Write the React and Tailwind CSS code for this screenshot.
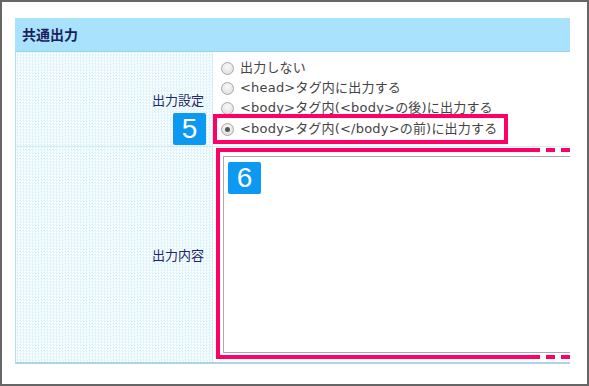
import React from 'react'

const jp = "font-['Noto_Sans_CJK_JP','Noto_Sans',sans-serif]"
const optFont = "font-['DejaVu_Sans','Noto_Sans_CJK_JP',sans-serif]"
const hatch =
  'bg-[conic-gradient(#dff4fa_25%,#fcfeff_0_50%,#dff4fa_0_75%,#fcfeff_0)] bg-size-[3px_3px]'

function Radio({ checked }) {
  return (
    <span className="w-[13px] h-[13px] shrink-0 rounded-full border border-[#a8a8a8] bg-[radial-gradient(circle_at_50%_35%,#fafafa,#d9d9d9)] flex items-center justify-center">
      {checked && <span className="w-[5px] h-[5px] rounded-full bg-[#555]" />}
    </span>
  )
}

function Badge({ n }) {
  return (
    <div className="w-[33px] h-[32px] rounded-[2px] bg-[#0d98f2] text-white flex items-center justify-center text-[28px] leading-none font-['Liberation_Sans',Arial,sans-serif]">
      {n}
    </div>
  )
}

function DashLine() {
  return (
    <div className="flex h-1 shrink-0">
      <div className="flex-1 bg-[#ff0066]" />
      <div className="w-[6px]" />
      <div className="w-[9px] bg-[#ff0066]" />
      <div className="w-[6px]" />
      <div className="w-[9px] bg-[#ff0066]" />
    </div>
  )
}

const options = [
  '出力しない',
  '<head>タグ内に出力する',
  '<body>タグ内(<body>の後)に出力する',
]

export default function App() {
  return (
    <div className={`w-[589px] h-[386px] border-2 border-[#666] bg-white ${jp}`}>
      <div className="ml-[13px] mt-[16px] w-[555px] overflow-hidden">
        {/* header */}
        <div className="h-[34px] bg-[#a8e2fc] border-b border-[#98d4ee] flex items-center pl-[7px]">
          <span className="text-[14px] font-bold text-[#1b1f5e]">共通出力</span>
        </div>

        <div className="border-l border-[#b6dded] border-b-2 border-b-[#a9d5e6]">
          {/* row 1 */}
          <div className="flex border-b border-[#d2edf6]">
            <div className={`w-[197px] shrink-0 border-r border-[#d2edf6] ${hatch} flex flex-col items-end justify-end pr-[6px] pb-[1px]`}>
              <span className="text-[13px] text-[#1f2767] pr-[2px] mb-[4px]">出力設定</span>
              <Badge n="5" />
            </div>
            <div className={`flex-1 bg-white pt-[6px] pb-[2px] flex flex-col items-start ${optFont}`}>
              {options.map(t => (
                <div key={t} className="h-5 flex items-center gap-[6px] pl-2 text-[13px] tracking-[0.2px] text-[#444]">
                  <Radio />
                  <span>{t}</span>
                </div>
              ))}
              <div className="relative z-10 -mt-1 h-[30px] w-[295px] border-4 border-[#ff0066] bg-white flex items-center gap-[6px] pl-1 text-[13px] tracking-[0.2px] text-[#444]">
                <Radio checked />
                <span className="whitespace-nowrap">{'<body>タグ内(</body>の前)に出力する'}</span>
              </div>
            </div>
          </div>

          {/* row 2 */}
          <div className="flex">
            <div className={`w-[197px] shrink-0 border-r border-[#d2edf6] ${hatch} flex items-center justify-end pr-[8px]`}>
              <span className="text-[13px] text-[#1f2767]">出力内容</span>
            </div>
            <div className="flex-1 bg-white pl-[3px] pt-px pb-[3px]">
              <div className="h-[211px] flex flex-col">
                <DashLine />
                <div className="flex-1 border-l-4 border-[#ff0066] pl-[3px] pt-1 pb-[2px] flex">
                  <div className="flex-1 border-l border-t border-b border-[#aaa] pl-1 pt-[5px]">
                    <Badge n="6" />
                  </div>
                </div>
                <DashLine />
              </div>
            </div>
          </div>
        </div>
      </div>
    </div>
  )
}
